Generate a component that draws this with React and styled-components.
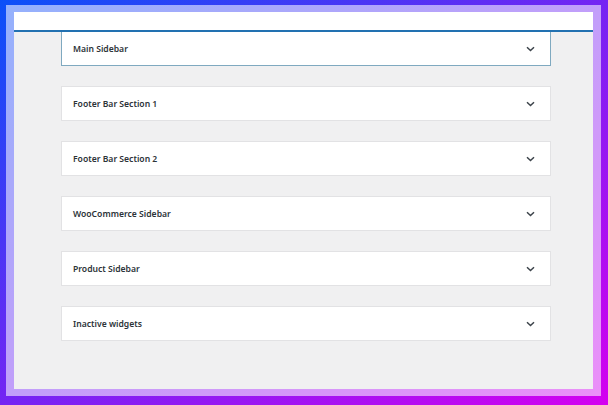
import React from 'react';
import styled, { createGlobalStyle } from 'styled-components';

const GlobalStyle = createGlobalStyle`
  html, body {
    margin: 0;
    padding: 0;
  }
  body {
    font-family: "Noto Sans", "Open Sans", sans-serif;
  }
`;

const Frame = styled.div`
  box-sizing: border-box;
  width: 608px;
  height: 405px;
  padding: 5px 7px 9px 6px;
  background: linear-gradient(to bottom right, #0a50f8 0%, #7424f3 50%, #d400f0 100%);
`;

const Glow = styled.div`
  box-sizing: border-box;
  height: 100%;
  padding: 7px 8px 7px 8px;
  background: rgba(255, 255, 255, 0.56);
`;

const Screen = styled.div`
  height: 100%;
  display: flex;
  flex-direction: column;
  background: #f0f0f1;
  overflow: hidden;
`;

const TopBar = styled.div`
  flex: none;
  height: 18px;
  background: #fff;
  border-bottom: 2px solid #2271b1;
`;

const AreaList = styled.div`
  display: flex;
  flex-direction: column;
  gap: 20px;
  padding-left: 47px;
  width: 490px;
`;

const Area = styled.div`
  box-sizing: border-box;
  height: ${p => (p.$open ? '34px' : '35px')};
  display: flex;
  align-items: center;
  justify-content: space-between;
  padding: 0 15px 0 11px;
  background: #fff;
  border: 1px solid ${p => (p.$open ? '#7fa9c0' : '#e2e2e4')};
  border-top: ${p => (p.$open ? 'none' : undefined)};
`;

const Title = styled.span`
  font-size: 8.6px;
  font-weight: 600;
  color: #2c3338;
`;

const Chevron = () => (
  <svg width="9" height="6" viewBox="0 0 9 6" fill="none">
    <path d="M1 1.2 L4.5 4.5 L8 1.2" stroke="#3c434a" strokeWidth="1.5" />
  </svg>
);

const areas = [
  'Main Sidebar',
  'Footer Bar Section 1',
  'Footer Bar Section 2',
  'WooCommerce Sidebar',
  'Product Sidebar',
  'Inactive widgets',
];

export default function App() {
  return (
    <>
      <GlobalStyle />
      <Frame>
        <Glow>
          <Screen>
            <TopBar />
            <AreaList>
              {areas.map((name, i) => (
                <Area key={name} $open={i === 0}>
                  <Title>{name}</Title>
                  <Chevron />
                </Area>
              ))}
            </AreaList>
          </Screen>
        </Glow>
      </Frame>
    </>
  );
}
